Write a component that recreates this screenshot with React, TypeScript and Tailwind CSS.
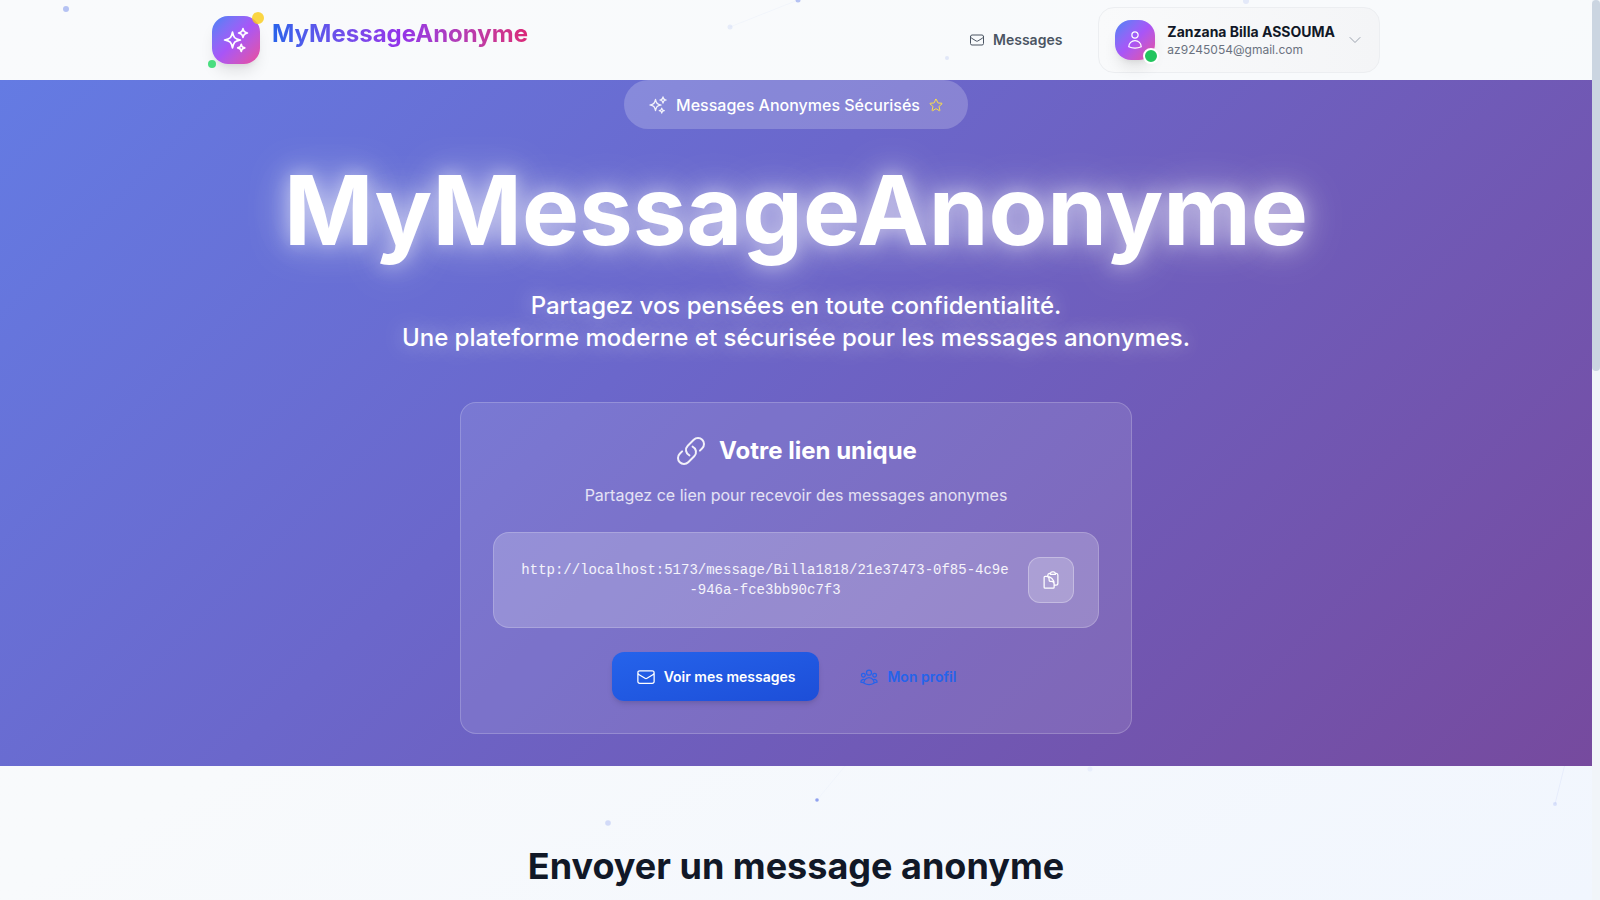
import {
  HiOutlineChevronDown,
  HiOutlineClipboardDocument,
  HiOutlineEnvelope,
  HiOutlineLink,
  HiOutlineSparkles,
  HiOutlineStar,
  HiOutlineUser,
  HiOutlineUserGroup,
} from "react-icons/hi2";

const user = {
  name: "Zanzana Billa ASSOUMA",
  email: "az9245054@gmail.com",
  link: "http://localhost:5173/message/Billa1818/21e37473-0f85-4c9e-946a-fce3bb90c7f3",
};

const particles = [
  { x: 66, y: 9, r: 3, opacity: 0.65 },
  { x: 730, y: 27, r: 2.5, opacity: 0.18 },
  { x: 798, y: 0, r: 2.5, opacity: 0.65 },
  { x: 947, y: 58, r: 2, opacity: 0.22 },
  { x: 1246, y: 1, r: 3, opacity: 0.2 },
  { x: 817, y: 800, r: 1.8, opacity: 0.7 },
  { x: 608, y: 823, r: 2.8, opacity: 0.25 },
  { x: 1090, y: 769, r: 2.5, opacity: 0.07 },
  { x: 1555, y: 804, r: 2, opacity: 0.18 },
];

const particleLinks = [
  { x1: 730, y1: 27, x2: 798, y2: 0, opacity: 0.06 },
  { x1: 817, y1: 800, x2: 850, y2: 760, opacity: 0.03 },
  { x1: 1555, y1: 804, x2: 1566, y2: 760, opacity: 0.08 },
];

function Particles() {
  return (
    <svg className="pointer-events-none absolute inset-0 h-full w-full" aria-hidden="true">
      {particleLinks.map(({ opacity, ...l }) => (
        <line key={l.x1} {...l} stroke="#667eea" strokeOpacity={opacity} />
      ))}
      {particles.map((p) => (
        <circle key={p.x} cx={p.x} cy={p.y} r={p.r} fill="#667eea" fillOpacity={p.opacity} />
      ))}
    </svg>
  );
}

function Header() {
  return (
    <header className="relative h-20 shrink-0 bg-[#f9fbfc]/30">
      <div className="mx-auto flex h-full max-w-[1200px] items-center justify-between px-4">
        <a href="#" className="flex items-start gap-3">
          <span className="relative flex h-12 w-12 items-center justify-center rounded-2xl bg-linear-to-br from-[#3b82f6] via-[#a855f7] to-[#ec4899] text-white shadow-lg">
            <HiOutlineSparkles className="h-7 w-7" />
            <span className="absolute -top-1 -right-1 h-3 w-3 rounded-full bg-[#facc15] opacity-80" />
            <span className="absolute -bottom-1 -left-1 h-2 w-2 rounded-full bg-[#4ade80]" />
          </span>
          <span className="bg-linear-to-r from-[#2563eb] via-[#9333ea] to-[#db2777] bg-clip-text text-2xl leading-9 font-bold text-transparent">
            MyMessageAnonyme
          </span>
        </a>

        <nav className="flex items-center gap-6">
          <a href="#messages" className="flex items-center gap-2 px-3 text-sm font-semibold text-[#4b5563]">
            <HiOutlineEnvelope className="h-4 w-4" />
            Messages
          </a>
          <button
            type="button"
            className="flex items-center gap-3 rounded-2xl border border-[#eceef1] bg-linear-to-r from-[#f9fafb] to-[#f4f5f7] px-4 py-3 text-left"
          >
            <span className="relative flex h-10 w-10 items-center justify-center rounded-2xl bg-linear-to-br from-[#3b82f6] via-[#a855f7] to-[#ec4899] text-white shadow-lg">
              <HiOutlineUser className="h-5 w-5" />
              <span className="absolute -right-1 -bottom-1 h-4 w-4 rounded-full border-2 border-white bg-[#22c55e]" />
            </span>
            <span>
              <span className="block text-sm leading-5 font-bold text-[#111827]">{user.name}</span>
              <span className="block text-xs leading-4 text-[#6b7280]">{user.email}</span>
            </span>
            <HiOutlineChevronDown className="h-4 w-4 text-[#9ca3af]" />
          </button>
        </nav>
      </div>
    </header>
  );
}

function LinkCard() {
  return (
    <div className="w-full max-w-2xl rounded-2xl border border-white/20 bg-white/10 p-8">
      <h2 className="flex items-center justify-center gap-3 text-2xl font-bold">
        <HiOutlineLink className="h-8 w-8 opacity-90" />
        Votre lien unique
      </h2>
      <p className="mt-4 text-base leading-[25px] text-white/80">
        Partagez ce lien pour recevoir des messages anonymes
      </p>

      <div className="mt-6 flex items-center gap-4 rounded-2xl border border-white/20 bg-white/20 p-6">
        <code className="flex-1 font-['Liberation_Mono',monospace] text-sm break-all text-white/90">
          {user.link}
        </code>
        <button
          type="button"
          aria-label="Copier le lien"
          className="flex h-[46px] w-[46px] shrink-0 items-center justify-center rounded-xl border border-white/30 bg-white/20"
        >
          <HiOutlineClipboardDocument className="h-5 w-5" />
        </button>
      </div>

      <div className="mt-6 flex justify-center gap-4 text-sm font-semibold">
        <a
          href="#messages"
          className="flex h-[49px] items-center gap-2 rounded-xl bg-linear-to-br from-[#2563eb] to-[#1d4ed8] px-6 shadow-md"
        >
          <HiOutlineEnvelope className="h-5 w-5" />
          Voir mes messages
        </a>
        <a href="#profil" className="flex h-[49px] items-center gap-2 px-6 text-[#2563eb]">
          <HiOutlineUserGroup className="h-5 w-5" />
          Mon profil
        </a>
      </div>
    </div>
  );
}

function Hero() {
  return (
    <section className="relative flex shrink-0 flex-col items-center bg-[linear-gradient(135deg,#647be3_0%,#6b67cb_40%,#764a9e_100%)] px-4 pb-8 text-center text-white">
      <div className="flex h-[49px] items-center gap-2 rounded-full bg-white/20 px-6 font-medium">
        <HiOutlineSparkles className="h-5 w-5 opacity-90" />
        Messages Anonymes Sécurisés
        <HiOutlineStar className="h-4 w-4 text-[#fde047]" />
      </div>
      <h1 className="mt-[33px] text-8xl leading-none font-bold [text-shadow:0_0_20px_rgba(255,255,255,0.5),0_0_40px_rgba(255,255,255,0.5),0_0_60px_rgba(255,255,255,0.1)]">
        MyMessageAnonyme
      </h1>
      <p className="mt-8 mb-12 text-2xl font-medium [text-shadow:0_0_20px_rgba(255,255,255,0.5)]">
        Partagez vos pensées en toute confidentialité.
        <br />
        Une plateforme moderne et sécurisée pour les messages anonymes.
      </p>
      <LinkCard />
    </section>
  );
}

export default function App() {
  return (
    <div className="flex h-screen font-['Inter',sans-serif]">
      <div className="relative flex min-w-0 flex-1 flex-col overflow-hidden bg-linear-to-br from-[#f9fafc] via-[#f8fafc] to-[#f1f6fe]">
        <Particles />
        <Header />
        <main className="flex flex-col">
          <Hero />
          <section className="relative px-4 pt-20 text-center">
            <h2 className="text-4xl font-bold text-[#111827]">Envoyer un message anonyme</h2>
          </section>
        </main>
      </div>
      <div className="w-2 shrink-0 bg-[#f1f5f9]" aria-hidden="true">
        <div className="h-[41.2%] rounded bg-[#cbd5e1]" />
      </div>
    </div>
  );
}
